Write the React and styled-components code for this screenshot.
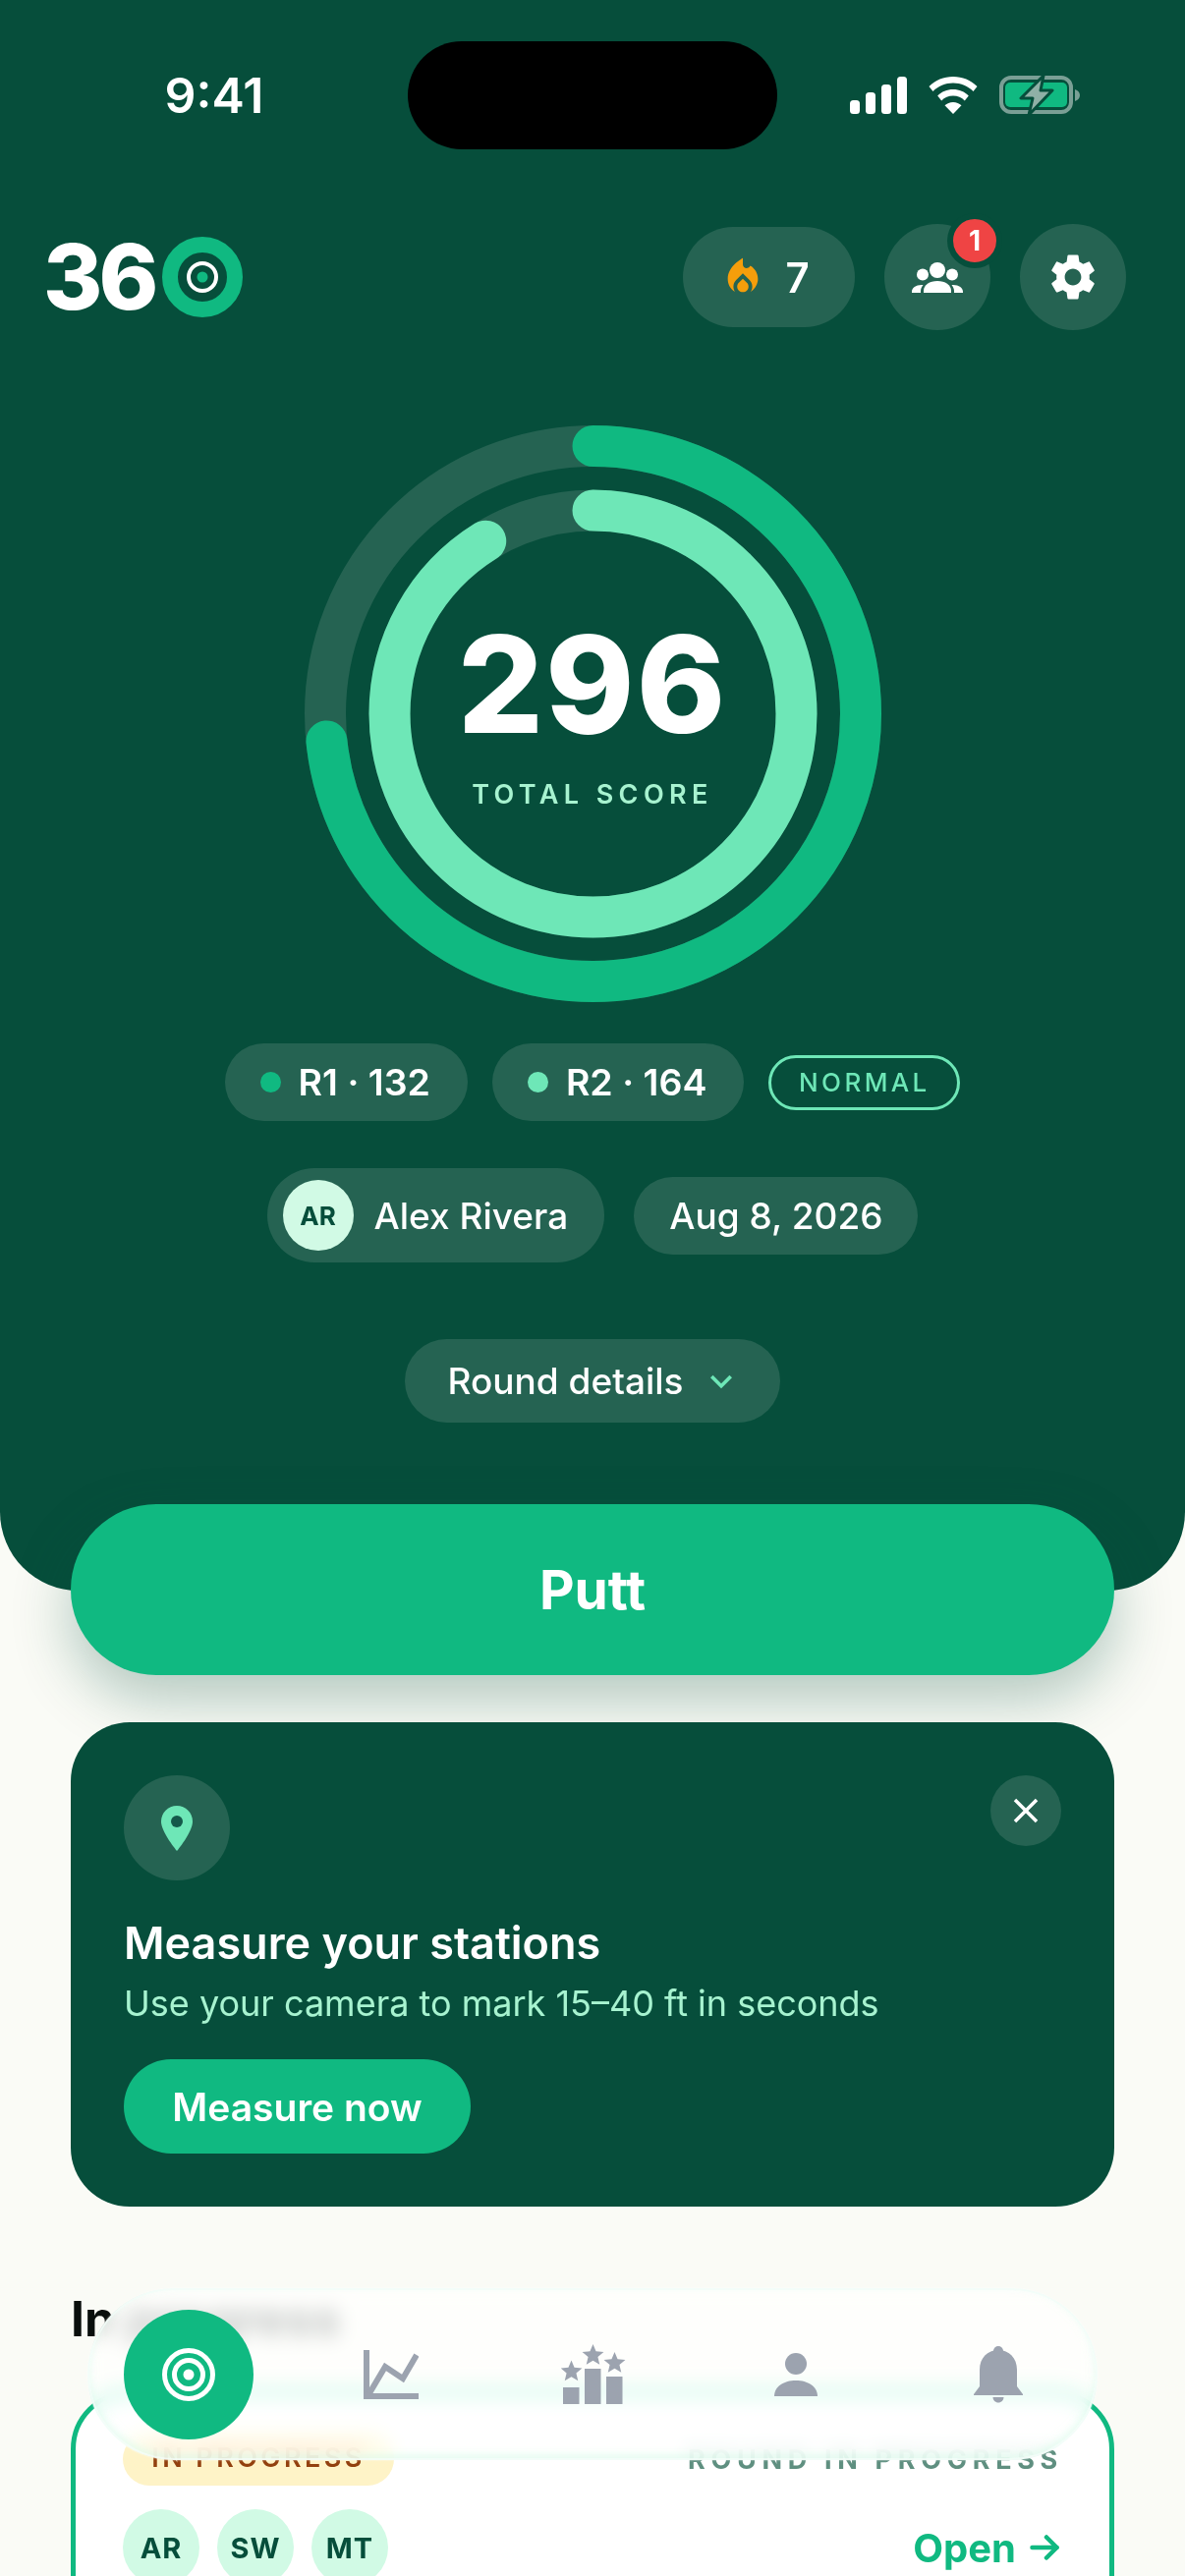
import React from 'react';
import styled, { createGlobalStyle } from 'styled-components';
import { MdSettings, MdLocalFireDepartment, MdKeyboardArrowDown, MdClose } from 'react-icons/md';

const GlobalStyle = createGlobalStyle`
  html, body { margin: 0; padding: 0; background: #fafbf6; }
  body { font-family: Inter, "Noto Sans", sans-serif; }
  * { box-sizing: border-box; }
`;

const Page = styled.div`
  position: relative;
  width: 1206px;
  height: 2622px;
  overflow: hidden;
  background: #fafbf6;
`;

const Hero = styled.header`
  height: 1619px;
  background: #064e3b;
  border-radius: 0 0 80px 80px;
  display: flex;
  flex-direction: column;
  align-items: center;
`;

const StatusBar = styled.div`
  width: 100%;
  padding-top: 42px;
  display: grid;
  grid-template-columns: 415px 376px 415px;
  height: 152px;
`;

const Time = styled.div`
  font-size: 50px;
  font-weight: 600;
  color: #fff;
  line-height: 110px;
  text-align: center;
  width: 436px;
`;

const Island = styled.div`
  height: 110px;
  background: #000;
  border-radius: 55px;
`;

const StatusIcons = styled.div`
  display: flex;
  align-items: center;
  gap: 22px;
  height: 110px;
  padding-left: 74px;
`;

const TopRow = styled.div`
  width: 100%;
  margin-top: 76px;
  padding: 0 60px 0 44px;
  display: flex;
  align-items: center;
  justify-content: space-between;
  height: 108px;
`;

const Logo = styled.div`
  display: flex;
  align-items: center;
  font-size: 92px;
  font-weight: 800;
  letter-spacing: -4px;
  color: #fff;
  line-height: 1;
  gap: 8px;
`;

const TopActions = styled.div`
  display: flex;
  align-items: center;
  gap: 30px;
`;

const StreakPill = styled.div`
  width: 175px;
  height: 102px;
  padding-right: 8px;
  border-radius: 51px;
  background: #256352;
  display: flex;
  align-items: center;
  justify-content: center;
  gap: 20px;
  color: #fff;
  font-size: 42px;
  font-weight: 600;
  svg { color: #f59e0b; }
`;

const RoundButton = styled.div`
  position: relative;
  width: 108px;
  height: 108px;
  border-radius: 50%;
  background: #256352;
  color: #fff;
  display: flex;
  align-items: center;
  justify-content: center;
`;

const Badge = styled.span`
  position: absolute;
  top: -11px;
  right: -12px;
  width: 44px;
  height: 44px;
  box-sizing: content-box;
  border-radius: 50%;
  background: #ef4444;
  border: 6px solid #064e3b;
  color: #fff;
  font-size: 28px;
  font-weight: 700;
  display: flex;
  align-items: center;
  justify-content: center;
`;

const RingWrap = styled.div`
  position: relative;
  margin-top: 97px;
  width: 587px;
  height: 587px;
  svg { display: block; }
`;

const RingCenter = styled.div`
  position: absolute;
  inset: 0;
  display: flex;
  flex-direction: column;
  align-items: center;
  justify-content: center;
`;

const Score = styled.div`
  font-size: 137px;
  font-weight: 800;
  color: #fff;
  line-height: 137px;
  letter-spacing: 2px;
`;

const ScoreLabel = styled.div`
  margin-top: 28px;
  font-size: 27px;
  font-weight: 600;
  letter-spacing: 5.4px;
  color: #a7f3d0;
  line-height: 32px;
`;

const ChipRow = styled.div`
  display: flex;
  align-items: center;
  gap: ${p => p.$gap}px;
  margin-top: ${p => p.$top}px;
`;

const Chip = styled.div`
  height: ${p => p.$h || 79}px;
  padding: 0 ${p => p.$pr || p.$px || 36}px 0 ${p => p.$px || 36}px;
  border-radius: 48px;
  background: #256352;
  color: #fff;
  font-size: ${p => p.$size || 37}px;
  font-weight: ${p => p.$weight || 500};
  display: flex;
  align-items: center;
  gap: ${p => p.$gap || 18}px;
`;

const Dot = styled.span`
  width: 21px;
  height: 21px;
  border-radius: 50%;
  background: ${p => p.$color};
`;

const ModeTag = styled.div`
  height: 56px;
  width: 195px;
  border: 3px solid #6ee7b7;
  border-radius: 28px;
  color: #6ee7b7;
  font-size: 26px;
  font-weight: 500;
  letter-spacing: 3.4px;
  display: flex;
  align-items: center;
  justify-content: center;
`;

const AvatarSmall = styled.span`
  width: 72px;
  height: 72px;
  border-radius: 50%;
  background: #d1fae5;
  color: #064e3b;
  font-size: 26px;
  font-weight: 700;
  display: flex;
  align-items: center;
  justify-content: center;
`;

const PuttButton = styled.div`
  position: relative;
  margin: -88px 72px 0;
  height: 174px;
  border-radius: 87px;
  background: #10b981;
  color: #fff;
  font-size: 55px;
  font-weight: 700;
  display: flex;
  align-items: center;
  justify-content: center;
  box-shadow: 0 24px 60px rgba(6, 78, 59, 0.3);
`;

const PromoCard = styled.section`
  position: relative;
  margin: 48px 72px 0;
  height: 493px;
  padding: 54px;
  border-radius: 60px;
  background: #064e3b;
  display: flex;
  flex-direction: column;
`;

const PromoIcon = styled.div`
  width: 108px;
  height: 108px;
  border-radius: 50%;
  background: #256352;
  display: flex;
  align-items: center;
  justify-content: center;
`;

const CloseButton = styled.div`
  position: absolute;
  top: 54px;
  right: 54px;
  width: 72px;
  height: 72px;
  border-radius: 50%;
  background: #256352;
  color: #fff;
  display: flex;
  align-items: center;
  justify-content: center;
`;

const PromoTitle = styled.div`
  margin-top: 36px;
  font-size: 45px;
  font-weight: 600;
  line-height: 56px;
  color: #fff;
`;

const PromoText = styled.div`
  margin-top: 10px;
  font-size: 36px;
  font-weight: 400;
  line-height: 46px;
  color: #a7f3d0;
`;

const PromoAction = styled.div`
  margin-top: 34px;
  width: 353px;
  height: 96px;
  border-radius: 48px;
  background: #10b981;
  color: #fff;
  font-size: 39px;
  font-weight: 600;
  display: flex;
  align-items: center;
  justify-content: center;
`;

const SectionTitle = styled.h2`
  margin: 84px 72px 0;
  font-size: 50px;
  font-weight: 700;
  line-height: 60px;
  color: #0a0f0d;
`;

const RoundCard = styled.section`
  margin: 43px 72px 0;
  height: 400px;
  padding: 38px 48px;
  border: 5px solid #10b981;
  border-radius: 60px;
  background: #fff;
`;

const RoundHead = styled.div`
  display: flex;
  justify-content: space-between;
  align-items: center;
`;

const StateTag = styled.span`
  width: 276px;
  height: 54px;
  padding-bottom: 3px;
  border-radius: 27px;
  background: #fef3c7;
  color: #92400e;
  font-size: 27px;
  font-weight: 600;
  letter-spacing: 3.4px;
  display: flex;
  align-items: center;
  justify-content: center;
`;

const RoundNote = styled.span`
  color: #5f8f80;
  font-size: 27px;
  font-weight: 700;
  letter-spacing: 5.7px;
  margin-right: -1px;
`;

const RoundFoot = styled.div`
  margin-top: 24px;
  display: flex;
  justify-content: space-between;
  align-items: center;
`;

const Players = styled.div`
  display: flex;
  gap: 18px;
`;

const PlayerAvatar = styled.span`
  width: 78px;
  height: 78px;
  border-radius: 50%;
  background: #d1fae5;
  color: #064e3b;
  font-size: 29px;
  font-weight: 700;
  letter-spacing: 1px;
  display: flex;
  align-items: center;
  justify-content: center;
`;

const OpenLink = styled.span`
  display: flex;
  align-items: center;
  gap: 14px;
  color: #10b981;
  font-size: 40px;
  font-weight: 700;
  margin-right: 3px;
`;

const BottomNav = styled.nav`
  position: absolute;
  left: 89px;
  top: 2329px;
  width: 1028px;
  height: 175px;
  padding-left: 35px;
  border-radius: 88px;
  background: rgba(255, 255, 255, 0.76);
  backdrop-filter: blur(10px) saturate(180%);
  border: 2px solid rgba(240, 253, 248, 0.8);
  box-shadow: 0 0 2px rgba(255, 255, 255, 0.9), inset 0 -4px 8px rgba(209, 250, 229, 0.55);
  display: grid;
  grid-template-columns: 169px repeat(4, 206px);
  align-items: center;
`;

const NavActive = styled.div`
  width: 132px;
  height: 132px;
  border-radius: 50%;
  background: #10b981;
  display: flex;
  align-items: center;
  justify-content: center;
`;

const NavSlot = styled.div`
  display: flex;
  align-items: center;
  justify-content: center;
`;

const Ring = ({ r, color, progress }) => {
  const c = 2 * Math.PI * r;
  return (
    <>
      <circle cx="293.5" cy="293.5" r={r} fill="none" stroke="#256352" strokeWidth="42" />
      <circle
        cx="293.5"
        cy="293.5"
        r={r}
        fill="none"
        stroke={color}
        strokeWidth="42"
        strokeLinecap="round"
        strokeDasharray={`${c * progress} ${c}`}
        transform="rotate(-90 293.5 293.5)"
      />
    </>
  );
};

const SignalIcon = () => (
  <svg width="58" height="38" viewBox="0 0 58 38" fill="#fff">
    <rect x="0" y="24" width="10" height="14" rx="3.5" />
    <rect x="16" y="16" width="10" height="22" rx="3.5" />
    <rect x="32" y="8" width="10" height="30" rx="3.5" />
    <rect x="48" y="0" width="10" height="38" rx="3.5" />
  </svg>
);

const WifiIcon = () => (
  <svg width="50" height="38" viewBox="0 0 50 38" fill="#fff">
    <path d="M25 0C15.5 0 7 3.6 0.5 10l4 5C9.8 9.6 17 6.5 25 6.5S40.200 9.600 45.500 15l4-5C43 3.600 34.500 0 25 0z" />
    <path d="M25 13c-6.200 0-11.700 2.400-15.800 6.400l4 5c3-3 7.200-4.900 11.800-4.900s8.800 1.900 11.800 4.900l4-5C36.700 15.400 31.200 13 25 13z" />
    <path d="M25 26c-3.300 0-6.300 1.300-8.500 3.300L25 38l8.500-8.700C31.300 27.300 28.300 26 25 26z" />
  </svg>
);

const BatteryIcon = () => (
  <svg width="82" height="40" viewBox="0 0 82 40">
    <rect x="2" y="2" width="71" height="35" rx="10" fill="none" stroke="#7a9f95" strokeWidth="4" />
    <path d="M77 14c3 1 5 3 5 6s-2 5-5 6z" fill="#7a9f95" />
    <rect x="6" y="7" width="63" height="25" rx="5" fill="#10b981" />
    <path d="M45 0L22 23h12l-4 17 24-25H42z" fill="#8fb0a6" stroke="#064e3b" strokeWidth="3" strokeLinejoin="round" />
  </svg>
);

const LogoMark = () => (
  <svg width="82" height="82" viewBox="0 0 82 82">
    <circle cx="41" cy="41" r="33" fill="none" stroke="#10b981" strokeWidth="16" />
    <circle cx="41" cy="41" r="14" fill="none" stroke="#fff" strokeWidth="4" />
    <circle cx="41" cy="41" r="5.500" fill="#10b981" />
  </svg>
);

const UsersIcon = () => (
  <svg width="52" height="31" viewBox="0 0 52 31" fill="#fff">
    <circle cx="26" cy="8" r="8" />
    <circle cx="11" cy="12.500" r="6" />
    <circle cx="41" cy="12.500" r="6" />
    <path d="M12 31v-2c0-6 6-10 14-10s14 4 14 10v2z" />
    <path d="M0 31v-1c0-4 4-7 10-7 .6 0 1 0 1.500.1C10 25 9 27 9 29v2z" />
    <path d="M52 31v-1c0-4-4-7-10-7-.6 0-1 0-1.500.1 1.500 1.900 2.500 3.900 2.500 5.900v2z" />
  </svg>
);

const PinIcon = () => (
  <svg width="32" height="46" viewBox="0 0 32 46">
    <path d="M16 0C7 0 0 7 0 16c0 11 16 30 16 30s16-19 16-30C32 7 25 0 16 0z" fill="#6ee7b7" />
    <circle cx="16" cy="16" r="6" fill="#14594a" />
  </svg>
);

const ArrowIcon = () => (
  <svg width="30" height="26" viewBox="0 0 30 26" fill="none" stroke="#10b981" strokeWidth="4.500" strokeLinecap="round" strokeLinejoin="round">
    <path d="M2.500 13h25" />
    <path d="M17 2.500L27.500 13 17 23.500" />
  </svg>
);

const TargetIcon = () => (
  <svg width="54" height="54" viewBox="0 0 54 54" fill="none" stroke="#fff" strokeWidth="5">
    <circle cx="27" cy="27" r="24.500" />
    <circle cx="27" cy="27" r="14.500" />
    <circle cx="27" cy="27" r="5.500" fill="#fff" stroke="none" />
  </svg>
);

const ChartIcon = () => (
  <svg width="56" height="50" viewBox="0 0 56 50" fill="none" stroke="#9ca3af" strokeWidth="6">
    <path d="M3 0v47h53" />
    <path d="M6 44L22 17l18 12L54 5" />
  </svg>
);

const starPoints = (cx, cy, R) => {
  const pts = [];
  for (let i = 0; i < 10; i++) {
    const rad = i % 2 === 0 ? R : R * 0.45;
    const a = (Math.PI / 5) * i - Math.PI / 2;
    pts.push(`${cx + rad * Math.cos(a)},${cy + rad * Math.sin(a)}`);
  }
  return pts.join(' ');
};

const PodiumIcon = () => (
  <svg width="66" height="61" viewBox="0 0 66 61" fill="#9ca3af">
    <rect x="2" y="44" width="16.500" height="17" />
    <rect x="24" y="25" width="16.500" height="36" />
    <rect x="46" y="33" width="16.500" height="28" />
    <polygon points={starPoints(10.500, 28, 11.500)} />
    <polygon points={starPoints(32.500, 11.500, 11.500)} />
    <polygon points={starPoints(54.500, 19.500, 11.500)} />
  </svg>
);

const PersonIcon = () => (
  <svg width="44" height="44" viewBox="0 0 44 44" fill="#9ca3af">
    <circle cx="22" cy="11" r="11" />
    <path d="M0 44c0-10 10-16 22-16s22 6 22 16z" />
  </svg>
);

const BellIcon = () => (
  <svg width="50" height="58" viewBox="0 0 50 58" fill="#9ca3af">
    <circle cx="25" cy="5" r="5" />
    <path d="M25 4C14 4 6 12 6 24v17l-6 8v1h50v-1l-6-8V24C44 12 36 4 25 4z" />
    <path d="M19.500 52h11c0 3-2.500 5.500-5.500 5.500s-5.500-2.500-5.500-5.500z" />
  </svg>
);

export default function App() {
  return (
    <Page>
      <GlobalStyle />
      <Hero>
        <StatusBar>
          <Time>9:41</Time>
          <Island />
          <StatusIcons>
            <SignalIcon />
            <WifiIcon />
            <BatteryIcon />
          </StatusIcons>
        </StatusBar>
        <TopRow>
          <Logo>36<LogoMark /></Logo>
          <TopActions>
            <StreakPill><MdLocalFireDepartment size={46} />7</StreakPill>
            <RoundButton>
              <UsersIcon />
              <Badge>1</Badge>
            </RoundButton>
            <RoundButton><MdSettings size={56} /></RoundButton>
          </TopActions>
        </TopRow>
        <RingWrap>
          <svg width="587" height="587" viewBox="0 0 587 587">
            <Ring r={272.5} color="#10b981" progress={132 / 180} />
            <Ring r={207} color="#6ee7b7" progress={164 / 180} />
          </svg>
          <RingCenter>
            <Score>296</Score>
            <ScoreLabel>TOTAL SCORE</ScoreLabel>
          </RingCenter>
        </RingWrap>
        <ChipRow $gap={25} $top={42}>
          <Chip $weight={600} $size={37.5} $pr={38}><Dot $color="#10b981" />R1 · 132</Chip>
          <Chip $weight={600} $size={37.5} $pr={38}><Dot $color="#6ee7b7" />R2 · 164</Chip>
          <ModeTag>NORMAL</ModeTag>
        </ChipRow>
        <ChipRow $gap={30} $top={48}>
          <Chip $h={96} $px={16} $pr={37} $gap={21}><AvatarSmall>AR</AvatarSmall>Alex Rivera</Chip>
          <Chip>Aug 8, 2026</Chip>
        </ChipRow>
        <ChipRow $gap={0} $top={78}>
          <Chip $h={85} $px={43} $pr={38} $gap={16}>Round details<MdKeyboardArrowDown size={44} color="#6ee7b7" /></Chip>
        </ChipRow>
      </Hero>

      <PuttButton>Putt</PuttButton>

      <PromoCard>
        <PromoIcon><PinIcon /></PromoIcon>
        <CloseButton><MdClose size={42} /></CloseButton>
        <PromoTitle>Measure your stations</PromoTitle>
        <PromoText>Use your camera to mark 15–40 ft in seconds</PromoText>
        <PromoAction>Measure now</PromoAction>
      </PromoCard>

      <SectionTitle>In progress</SectionTitle>

      <RoundCard>
        <RoundHead>
          <StateTag>IN PROGRESS</StateTag>
          <RoundNote>ROUND IN PROGRESS</RoundNote>
        </RoundHead>
        <RoundFoot>
          <Players>
            <PlayerAvatar>AR</PlayerAvatar>
            <PlayerAvatar>SW</PlayerAvatar>
            <PlayerAvatar>MT</PlayerAvatar>
          </Players>
          <OpenLink>Open<ArrowIcon /></OpenLink>
        </RoundFoot>
      </RoundCard>

      <BottomNav>
        <NavActive><TargetIcon /></NavActive>
        <NavSlot><ChartIcon /></NavSlot>
        <NavSlot><PodiumIcon /></NavSlot>
        <NavSlot><PersonIcon /></NavSlot>
        <NavSlot><BellIcon /></NavSlot>
      </BottomNav>
    </Page>
  );
}
